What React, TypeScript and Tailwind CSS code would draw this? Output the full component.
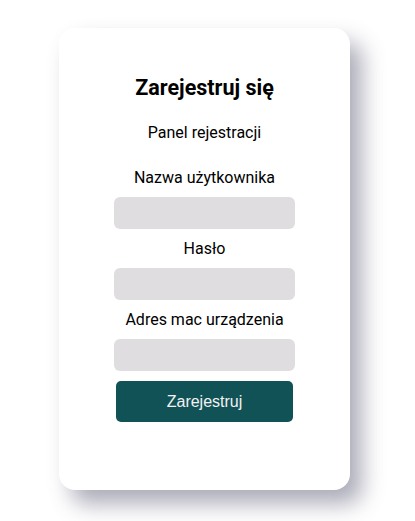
export default function App() {
  return (
    <div className="min-h-[521px] w-full bg-white pt-[28px] font-['Roboto',sans-serif]">
      <div className="ml-[59px] flex h-[462px] w-[291px] flex-col items-center rounded-[16px] bg-white pt-[46px] shadow-[12px_14px_22px_rgba(70,70,100,0.45)]">
        <h1 className="text-[21.5px] leading-[28px] font-bold text-black">Zarejestruj się</h1>
        <p className="mt-[19px] text-[16px] leading-[24px] text-black">Panel rejestracji</p>

        <label className="mt-[21px] text-[16px] leading-[24px] text-black">Nazwa użytkownika</label>
        <input type="text" className="mt-[7px] h-[32px] w-[181px] rounded-[6px] bg-[#dfdddf] px-2 outline-none" />

        <label className="mt-[8px] text-[16px] leading-[24px] text-black">Hasło</label>
        <input type="password" className="mt-[7px] h-[32px] w-[181px] rounded-[6px] bg-[#dfdddf] px-2 outline-none" />

        <label className="mt-[8px] text-[16px] leading-[24px] text-black">Adres mac urządzenia</label>
        <input type="text" className="mt-[7px] h-[32px] w-[181px] rounded-[6px] bg-[#dfdddf] px-2 outline-none" />

        <button className="mt-[10px] h-[41px] w-[177px] rounded-[5px] bg-[#115257] font-['Liberation_Sans',Arial,sans-serif] text-[16px] text-[#f2f2f2]">
          Zarejestruj
        </button>
      </div>
    </div>
  )
}
